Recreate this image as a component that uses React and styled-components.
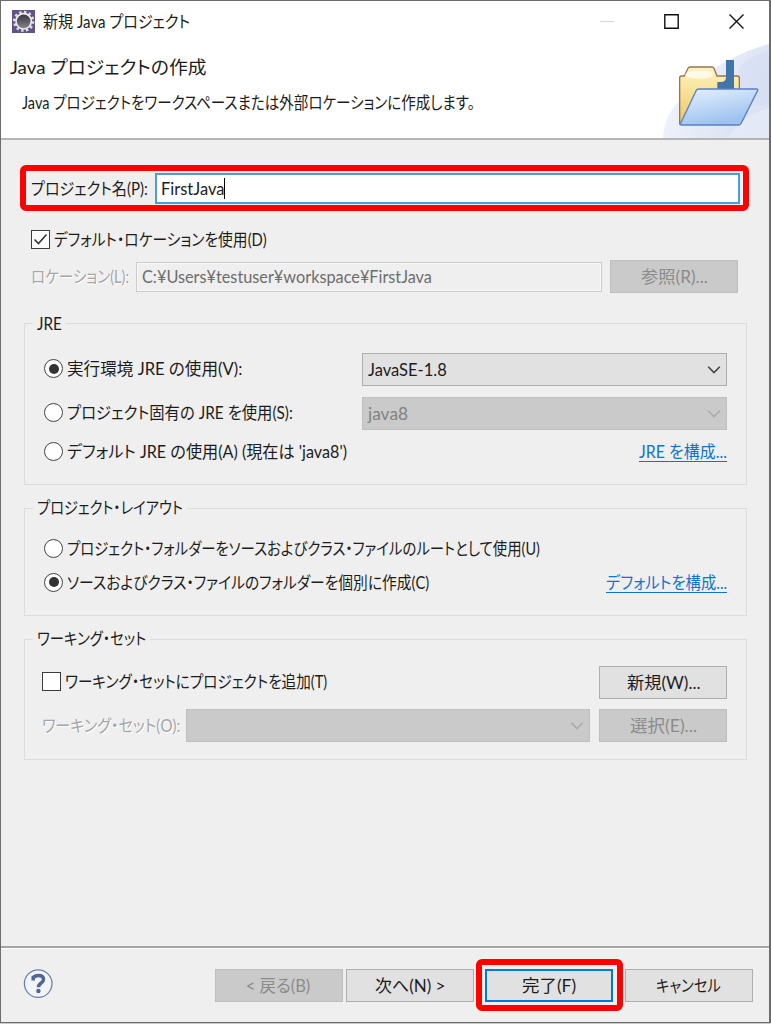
import React, { useLayoutEffect, useRef, useState } from 'react';
import styled, { createGlobalStyle, css } from 'styled-components';

const GlobalStyle = createGlobalStyle`
  * {
    box-sizing: border-box;
  }
  body {
    margin: 0;
    background: #cbcbcb;
    font-family: Lato, 'Noto Sans CJK JP', sans-serif;
    font-size: 16.5px;
    color: #1c1c1c;
  }
`;

const Dialog = styled.div`
  display: flex;
  flex-direction: column;
  width: 771px;
  height: 1023px;
  margin-bottom: 1px;
  border: solid #6c6c6c;
  border-width: 1px 2px 1px 1px;
  background: #efefef;
  overflow: hidden;
`;

const Header = styled.header`
  display: grid;
  grid-template-columns: 1fr 109px;
  grid-template-rows: 43px 94px;
  height: 139px;
  background: #fff;
  border-bottom: 2px solid #b4b4b4;
  flex: none;
`;

const TitleBar = styled.div`
  grid-column: 1 / -1;
  display: flex;
  align-items: center;
  padding: 0 25px 3px 11px;
`;

const Title = styled.div`
  flex: 1;
  margin-left: 8px;
`;

const WindowControls = styled.div`
  display: flex;
  gap: 50px;
`;

const Intro = styled.div`
  padding: 9px 0 0 9px;
`;

const Heading = styled.h1`
  margin: 0;
  font-size: 18px;
  font-weight: 400;
  line-height: 28px;
`;

const Description = styled.p`
  margin: 8px 0 0 12px;
  line-height: 28px;
`;

const Body = styled.main`
  flex: 1;
  display: flex;
  flex-direction: column;
  padding: 33px 22px 0 23px;
`;

const Row = styled.div`
  display: flex;
  align-items: center;
  height: ${(p) => p.$h}px;
  margin-top: ${(p) => p.$mt || 0}px;
  padding-left: ${(p) => p.$pl || 0}px;
  padding-right: ${(p) => p.$pr || 0}px;
`;

const marked = css`
  position: relative;
  &::after {
    content: '';
    position: absolute;
    inset: ${(p) => p.$inset};
    border: 6px solid #fe0000;
    border-radius: 6px;
    pointer-events: none;
  }
`;

const NameRow = styled(Row)`
  ${marked}
`;

const TextBox = styled.div`
  display: flex;
  align-items: center;
  flex: 1;
  height: ${(p) => (p.$disabled ? 30 : 31)}px;
  padding-left: ${(p) => (p.$disabled ? 5 : 4)}px;
  background: ${(p) => (p.$disabled ? '#efefef' : '#fff')};
  border: ${(p) => (p.$disabled ? '1px solid #cbcbcb' : '2px solid #4a9be0')};
  color: ${(p) => (p.$disabled ? '#6d6d6d' : '#1c1c1c')};
  ${(p) => p.$disabled && 'box-shadow: inset 0 0 0 1px #f9f9f9;'}
`;

const Caret = styled.span`
  width: 1px;
  height: 21px;
  background: #000;
`;

const Button = styled.button`
  display: flex;
  align-items: center;
  justify-content: center;
  width: 128px;
  height: 33px;
  padding: 0 2px 0 0;
  font: inherit;
  flex: none;
  color: ${(p) => (p.disabled ? '#8b8b8b' : '#1c1c1c')};
  background: ${(p) => (p.disabled ? '#cacaca' : '#e1e1e1')};
  border: ${(p) => (p.$primary ? '2px solid #0078d7' : `1px solid ${p.disabled ? '#bebebe' : '#adadad'}`)};
  ${(p) => p.$primary && marked}
`;

const Select = styled.div`
  display: flex;
  align-items: center;
  justify-content: space-between;
  width: ${(p) => p.$w}px;
  height: 33px;
  padding: 0 5px;
  flex: none;
  color: ${(p) => (p.$disabled ? '#838383' : '#1c1c1c')};
  background: ${(p) => (p.$disabled ? '#cacaca' : '#e1e1e1')};
  border: 1px solid ${(p) => (p.$disabled ? '#bfbfbf' : '#adadad')};
`;

const Group = styled.fieldset`
  height: ${(p) => p.$h}px;
  min-width: 0;
  margin: ${(p) => p.$mt}px 0 0;
  padding: 0 19px 0 17px;
  border: 1px solid #dcdcdc;
  flex: none;
`;

const Legend = styled.legend`
  height: 21px;
  margin-left: -9px;
  padding: 0 4px;
  line-height: 21px;
`;

const Spacer = styled.div`
  flex: 1;
`;

const Gap = styled.div`
  flex: none;
  width: ${(p) => p.$w}px;
`;

const Radio = styled.span`
  display: grid;
  place-items: center;
  width: 19px;
  height: 19px;
  margin: -2px 4px 0 2px;
  border: 1.5px solid #444;
  border-radius: 50%;
  background: #fff;
  &::after {
    content: '';
    width: 10px;
    height: 10px;
    border-radius: 50%;
    background: ${(p) => (p.$checked ? '#333' : 'transparent')};
  }
`;

const Check = styled.span`
  display: grid;
  place-items: center;
  width: 19px;
  height: 19px;
  margin: -2px 4px 0 0;
  border: 1.5px solid #3c3c3c;
  background: #fff;
`;

const Muted = styled.span`
  color: #a5a5a5;
  text-shadow: 1px 1px #fff;
`;

const Link = styled.a`
  color: #1272d0;
  border-bottom: 1px solid #1272d0;
  height: 19px;
  line-height: 19px;
`;

const Footer = styled.footer`
  display: flex;
  align-items: flex-start;
  height: 76px;
  padding: 21px 16px 0 22px;
  border-top: 2px solid #a5a5a5;
  box-shadow: inset 0 1px #fff;
  flex: none;
`;

const FitBox = styled.span`
  display: inline-block;
  flex: none;
  line-height: inherit;
  white-space: nowrap;
  vertical-align: top;
`;

const FitInner = styled.span`
  display: inline-block;
  transform-origin: 0 50%;
  font-feature-settings: 'palt';
`;

// Condenses the glyphs so the label takes exactly w pixels.
const Fit = ({ w, y = 0, children }) => {
  const ref = useRef(null);
  const [scale, setScale] = useState(1);

  useLayoutEffect(() => {
    setScale(w / ref.current.offsetWidth);
  }, [w, children]);

  return (
    <FitBox style={{ width: w }}>
      <FitInner ref={ref} style={{ transform: `translateY(${y}px) scaleX(${scale})` }}>
        {children}
      </FitInner>
    </FitBox>
  );
};

const Chevron = ({ color = '#444' }) => (
  <svg width="14" height="10" viewBox="0 0 14 10" fill="none" stroke={color} strokeWidth="1.6">
    <path d="M1.2 1.8 7 7.6l5.8-5.8" />
  </svg>
);

const EclipseIcon = () => (
  <svg width="23" height="23" viewBox="0 0 69 69">
    <defs>
      <linearGradient id="lens" x1="0" y1="0" x2="0" y2="1">
        <stop offset="0" stopColor="#35323b" />
        <stop offset="1" stopColor="#8a8690" />
      </linearGradient>
    </defs>
    <rect width="69" height="69" fill="#615287" />
    <circle cx="35" cy="34" r="28" fill="none" stroke="#ddd" strokeWidth="8" strokeDasharray="7.4 7.26" />
    <circle cx="35" cy="34" r="23" fill="url(#lens)" stroke="#ececec" strokeWidth="5" />
  </svg>
);

const ProjectBanner = () => (
  <svg width="109" height="94" viewBox="240 132 327 282">
    <defs>
      <linearGradient id="sky" x1="0" y1="0" x2="1" y2="0.4">
        <stop offset="0" stopColor="#f6f8fd" />
        <stop offset="1" stopColor="#dae2f4" />
      </linearGradient>
      <linearGradient id="back" x1="0" y1="0" x2="0" y2="1">
        <stop offset="0" stopColor="#fff4c4" />
        <stop offset="0.4" stopColor="#f9e39a" />
        <stop offset="1" stopColor="#edc566" />
      </linearGradient>
      <linearGradient id="front" x1="0" y1="0" x2="0.4" y2="1">
        <stop offset="0" stopColor="#e6f1fe" />
        <stop offset="1" stopColor="#9dc2ef" />
      </linearGradient>
    </defs>
    <path d="M249 414c2-45 20-85 50-112 60-80 160-140 268-170v282z" fill="url(#sky)" />
    <path d="M478 200c28-25 55-38 89-48v160c-30 2-60 6-89 18z" fill="#d3dcf1" opacity="0.5" />
    <path d="M480 370c25-22 50-35 87-46v90H440z" fill="#e9eef9" opacity="0.6" />
    <path
      d="M299 372V234q0-6 6-6h8l11-23q2-4 6-4h66q4 0 6 4l9 23h61q6 0 6 6v60l-90 78z"
      fill="url(#back)"
      stroke="#9b7351"
      strokeWidth="4"
    />
    <ellipse cx="358" cy="224" rx="42" ry="12" fill="#fffdf2" opacity="0.8" />
    <path d="M412 246h11q15 0 15-14v-52h24v88h-50z" fill="#4276a8" />
    <path d="M356 267h174q5 0 3 4l-49 98q-3 6-8 6H304q-4 0-2-5l47-99q2-4 7-4z" fill="url(#front)" stroke="#5b7fc4" strokeWidth="4" />
  </svg>
);

const HelpIcon = () => (
  <svg width="30" height="30" viewBox="0 0 30 30">
    <circle cx="15.2" cy="14.6" r="13.8" fill="#f3f4f7" stroke="#6c81a6" strokeWidth="1.3" />
    <path d="M10.2 11.4V8.4Q12.5 6.4 15.5 6.4q5 0 5 4 0 2-2.6 3.8-2.4 1.6-2.4 4" fill="none" stroke="#4f6792" strokeWidth="3.5" />
    <circle cx="15.4" cy="22" r="2.2" fill="#4f6792" />
  </svg>
);

const App = () => (
  <>
    <GlobalStyle />
    <Dialog>
      <Header>
        <TitleBar>
          <EclipseIcon />
          <Title>
            <Fit w={147}>新規 Java プロジェクト</Fit>
          </Title>
          <WindowControls>
            <svg width="14" height="15" viewBox="0 0 14 15">
              <path d="M0 7.5h14" stroke="#d5d5d5" />
            </svg>
            <svg width="15" height="15" viewBox="0 0 15 15">
              <path d="M.8.8h13.4v13.4H.8z" fill="none" stroke="#111" strokeWidth="1.4" />
            </svg>
            <svg width="15" height="15" viewBox="0 0 15 15">
              <path d="m.5.5 14 14m0-14-14 14" stroke="#111" strokeWidth="1.4" />
            </svg>
          </WindowControls>
        </TitleBar>
        <Intro>
          <Heading>
            <Fit w={197}>Java プロジェクトの作成</Fit>
          </Heading>
          <Description>
            <Fit w={453}>Java プロジェクトをワークスペースまたは外部ロケーションに作成します。</Fit>
          </Description>
        </Intro>
        <ProjectBanner />
      </Header>

      <Body>
        <NameRow $h={31} $pl={7} $pr={7} $inset="-8px -2px -7px -4px">
          <Fit w={117} y={-1}>プロジェクト名(P):</Fit>
          <Gap $w={7} />
          <TextBox>
            <Fit w={63}>FirstJava</Fit>
            <Caret />
          </TextBox>
        </NameRow>

        <Row $h={24} $mt={24} $pl={7}>
          <Check>
            <svg width="15" height="13" viewBox="0 0 15 13" fill="none" stroke="#333" strokeWidth="1.6">
              <path d="m1.5 6.5 4 4 8-9" />
            </svg>
          </Check>
          <Fit w={213} y={-1}>デフォルト・ロケーションを使用(D)</Fit>
        </Row>
        <Row $h={33} $mt={8} $pl={7} $pr={9}>
          <Muted>
            <Fit w={98} y={-1}>ロケーション(L):</Fit>
          </Muted>
          <Gap $w={7} />
          <TextBox $disabled>
            <Fit w={290}>C:¥Users¥testuser¥workspace¥FirstJava</Fit>
          </TextBox>
          <Gap $w={8} />
          <Button disabled>
            <Fit w={67} y={-1}>参照(R)...</Fit>
          </Button>
        </Row>

        <Group $h={172} $mt={20}>
          <Legend>
            <Fit w={25} y={1}>JRE</Fit>
          </Legend>
          <Row $h={33} $mt={19}>
            <Radio $checked />
            <Fit w={175} y={-2}>実行環境 JRE の使用(V):</Fit>
            <Spacer />
            <Select $w={365}>
              <Fit w={79}>JavaSE-1.8</Fit>
              <Chevron />
            </Select>
          </Row>
          <Row $h={33} $mt={11}>
            <Radio />
            <Fit w={226} y={-2}>プロジェクト固有の JRE を使用(S):</Fit>
            <Spacer />
            <Select $w={365} $disabled>
              <Fit w={40}>java8</Fit>
              <Chevron color="#aaa" />
            </Select>
          </Row>
          <Row $h={24} $mt={10}>
            <Radio />
            <Fit w={280} y={-1}>デフォルト JRE の使用(A) (現在は 'java8')</Fit>
            <Spacer />
            <Link>
              <Fit w={88}>JRE を構成...</Fit>
            </Link>
          </Row>
        </Group>

        <Group $h={118} $mt={13}>
          <Legend>
            <Fit w={146}>プロジェクト・レイアウト</Fit>
          </Legend>
          <Row $h={24} $mt={18}>
            <Radio />
            <Fit w={473} y={-1}>プロジェクト・フォルダーをソースおよびクラス・ファイルのルートとして使用(U)</Fit>
          </Row>
          <Row $h={24} $mt={10}>
            <Radio $checked />
            <Fit w={362} y={-1}>ソースおよびクラス・ファイルのフォルダーを個別に作成(C)</Fit>
            <Spacer />
            <Link>
              <Fit w={121}>デフォルトを構成...</Fit>
            </Link>
          </Row>
        </Group>

        <Group $h={131} $mt={13}>
          <Legend>
            <Fit w={109}>ワーキング・セット</Fit>
          </Legend>
          <Row $h={33} $mt={16}>
            <Check />
            <Fit w={262} y={-2}>ワーキング・セットにプロジェクトを追加(T)</Fit>
            <Spacer />
            <Button>
              <Fit w={74} y={-1}>新規(W)...</Fit>
            </Button>
          </Row>
          <Row $h={33} $mt={10}>
            <Muted>
              <Fit w={138} y={-1}>ワーキング・セット(O):</Fit>
            </Muted>
            <Spacer />
            <Select $w={404} $disabled>
              <span />
              <Chevron color="#aaa" />
            </Select>
            <Gap $w={9} />
            <Button disabled>
              <Fit w={67} y={-1}>選択(E)...</Fit>
            </Button>
          </Row>
        </Group>
      </Body>

      <Footer>
        <HelpIcon />
        <Spacer />
        <Row $h={33}>
          <Button disabled>
            <Fit w={65} y={-1}>&lt; 戻る(B)</Fit>
          </Button>
          <Gap $w={3} />
          <Button>
            <Fit w={70} y={-1}>次へ(N) &gt;</Fit>
          </Button>
          <Gap $w={11} />
          <Button $primary $inset="-12px -12px -11px -11px">
            <Fit w={54} y={-1}>完了(F)</Fit>
          </Button>
          <Gap $w={12} />
          <Button>
            <Fit w={65} y={-1}>キャンセル</Fit>
          </Button>
        </Row>
      </Footer>
    </Dialog>
  </>
);

export default App;
